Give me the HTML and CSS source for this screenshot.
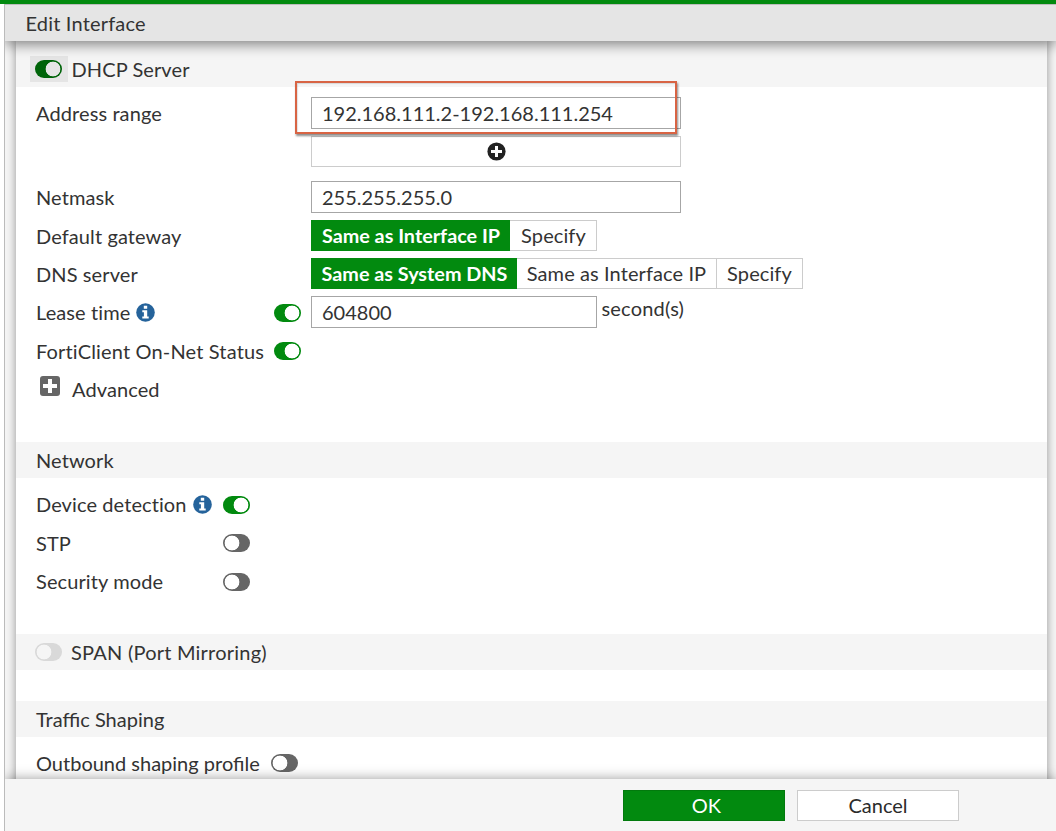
FILE: index.html
```html
<!DOCTYPE html>
<html lang="en">
<head>
<meta charset="utf-8">
<title>Edit Interface</title>
<link rel="stylesheet" href="styles.css">
</head>
<body>
<svg class="defs" aria-hidden="true">
  <symbol id="info" viewBox="0 0 19 19"><circle cx="9.5" cy="9.5" r="9.3" fill="#25639b"/><path d="M7.8 2.8h3.4v2.9H7.8zM6.3 7.2h4.9v6.3h1.5v2H6.3v-2h1.6V9.2H6.3z" fill="#fff"/></symbol>
</svg>
<div class="app">
  <div class="topbar"></div>
  <div class="dialog">
    <header class="title">Edit Interface</header>
    <main class="content">
      <div class="panel">
        <h2 class="section section-toggle"><span class="focus"><i class="switch on dark"></i></span><span class="heading">DHCP Server</span></h2>
        <div class="rows">
          <div class="row range">
            <span class="label">Address range</span>
            <div class="stack">
              <div class="input">192.168.111.2-192.168.111.254<span class="highlight"></span></div>
              <div class="add"><svg width="19" height="19" viewBox="0 0 19 19"><circle cx="9.5" cy="9.5" r="9.1" fill="#222"/><path d="M8 4h3v4h4v3h-4v4H8v-4H4V8h4z" fill="#fff"/></svg></div>
            </div>
          </div>
          <div class="row netmask"><span class="label">Netmask</span><div class="input">255.255.255.0</div></div>
          <div class="row gateway"><span class="label">Default gateway</span><div class="choices"><span class="choice active gw-ip">Same as Interface IP</span><span class="choice specify">Specify</span></div></div>
          <div class="row dns"><span class="label">DNS server</span><div class="choices"><span class="choice active sys">Same as System DNS</span><span class="choice ip">Same as Interface IP</span><span class="choice specify">Specify</span></div></div>
          <div class="row lease"><span class="label">Lease time<svg class="info"><use href="#info"/></svg></span><i class="switch on"></i><div class="input short">604800</div><span class="unit">second(s)</span></div>
          <div class="row status"><span class="label">FortiClient On-Net Status</span><i class="switch on"></i></div>
          <div class="row advanced"><svg class="expand" width="20" height="20" viewBox="0 0 20 20"><rect width="20" height="20" rx="3" fill="#666"/><path d="M8 3h4v5h5v4h-5v5H8v-5H3V8h5z" fill="#fff"/></svg><span>Advanced</span></div>
        </div>
        <h2 class="section">Network</h2>
        <div class="rows network">
          <div class="row"><span class="label">Device detection<svg class="info"><use href="#info"/></svg></span><i class="switch on"></i></div>
          <div class="row stp"><span class="label">STP</span><i class="switch"></i></div>
          <div class="row"><span class="label">Security mode</span><i class="switch"></i></div>
        </div>
        <h2 class="section section-toggle span-section"><i class="switch disabled"></i><span class="heading">SPAN (Port Mirroring)</span></h2>
        <h2 class="section traffic">Traffic Shaping</h2>
        <div class="rows shaping">
          <div class="row"><span class="label">Outbound shaping profile</span><i class="switch"></i></div>
        </div>
      </div>
    </main>
    <footer class="footer"><button class="btn primary">OK</button><button class="btn">Cancel</button></footer>
  </div>
</div>
</body>
</html>
```
FILE: styles.css
```css
* { box-sizing: border-box; }
body { margin: 0; background: #fff; color: #333; font: 20px/22px Lato, sans-serif; letter-spacing: .1px; font-variant-ligatures: none; }
.defs { display: none; }
.app { height: 831px; display: flex; flex-direction: column; overflow: hidden; }
.topbar { height: 4px; flex: none; background: #028a0f; }
.dialog { flex: 1; min-height: 0; display: flex; flex-direction: column; margin-left: 4px; border-left: 1px solid #bbb; background: #f5f5f5; }
.title { height: 37px; flex: none; position: relative; z-index: 2; padding: 7px 20.5px 0; border-top: 1px solid #bcbcbc; background: #e5e5e5; letter-spacing: .18px; box-shadow: 0 3px 14px 0 rgba(0,0,0,.5); clip-path: inset(0 0 -40px 0); }
.content { flex: 1; min-height: 0; overflow: hidden; padding: 0 9px 0 11px; }
.panel { height: 800px; padding-top: 10px; background: #fff; box-shadow: 0 0 9px rgba(0,0,0,.4); }
.section { height: 36px; margin: 0; padding: 7px 20px 0; background: #f5f5f5; font-size: inherit; font-weight: 400; }
.section-toggle { display: flex; padding: 0 20px 0 14px; align-items: center; gap: 3.5px; }
.panel > .section:first-child { height: 46px; margin-top: -10px; padding-top: 10px; }
.focus { width: 38px; height: 26px; padding: 4px 5px; background: #e5e5e5; }
.switch { display: block; flex: none; width: 27px; height: 18px; border-radius: 9px; background: radial-gradient(circle at 9px 9px, #fff 7px, transparent 7.7px), #666; }
.switch.on { background: radial-gradient(circle at 18px 9px, #fff 7px, transparent 7.7px), #028a0f; }
.switch.dark { background: radial-gradient(circle at 18px 9px, #e5e5e5 7px, transparent 7.7px), #006409; }
.switch.disabled { background: radial-gradient(circle at 9px 9px, #f5f5f5 7px, transparent 7.7px), #d9d9d9; }
.row { display: flex; align-items: flex-start; padding-left: 20px; height: 38px; }
.label { width: 275px; display: flex; align-items: center; white-space: nowrap; }
.range { height: 87px; padding-top: 10px; }
.range .label { margin-top: 5px; }
.input { position: relative; width: 370px; height: 32px; padding: 4px 10px; border: 1px solid #a6a6a6; background: #fff; letter-spacing: 0; white-space: nowrap; }
.highlight { position: absolute; left: -17px; top: -17px; width: 382px; height: 53px; border: 2px solid #d86444; box-shadow: 1px 2px 2px rgba(0,0,0,.45), inset 1px 1px 1px rgba(0,0,0,.12); }
.add { display: flex; justify-content: center; width: 370px; height: 31px; margin-top: 7px; padding: 5px 0 0 0; border: 1px solid #ccc; }
.netmask { height: 43px; padding-top: 7px; }
.netmask .label { margin-top: 5px; }
.gateway, .dns { padding-top: 3px; }
.gateway .label, .dns .label { margin-top: 5px; }
.choices { display: flex; }
.choice { height: 31px; padding: 3px 0 0; border: 1px solid #ccc; border-left: 0; text-align: center; white-space: nowrap; }
.active { padding-left: 2px; border-color: #028a0f; background: #028a0f; color: #fff; font-size: 19.8px; font-weight: 700; letter-spacing: 0; }
.gw-ip { width: 199px; }
.specify { width: 86px; }
.gateway .specify { width: 87px; padding-left: 1px; }
.sys { width: 206px; }
.ip { width: 200px; }
.lease { height: 39px; padding-top: 3px; }
.lease .label { width: 238px; margin-top: 5px; }
.lease .switch { margin: 8px 10px 0 0; }
.short { width: 286px; }
.unit { margin: 1px 0 0 4.5px; letter-spacing: .2px; }
.info { width: 19px; height: 19px; margin: 1px 0 0 6px; }
.status .label { width: 238px; margin-top: 8px; letter-spacing: .16px; }
.status .switch { margin-top: 10px; }
.advanced { height: 72px; padding: 8px 0 0 24px; gap: 12px; }
.expand { margin-top: -2px; }
.network { height: 156px; padding-top: 8px; }
.network .label { width: 187px; margin-top: 7px; }
.network .stp .label { margin-top: 8px; }
.network .switch { margin-top: 10px; }
.network .row:last-child { margin-top: 1px; }
.span-section { padding-left: 19px; gap: 9px; letter-spacing: .22px; }
.traffic { margin-top: 31px; }
.traffic, .shaping { letter-spacing: 0; font-variant-ligatures: normal; }
.shaping { padding-top: 15px; }
.shaping .label { width: 235px; }
.shaping .switch { margin-top: 2px; }
.footer { height: 52px; flex: none; position: relative; z-index: 2; display: flex; gap: 12px; padding: 11px 0 0 618px; background: #f5f5f5; box-shadow: 0 0 12px rgba(0,0,0,.4); clip-path: inset(-40px 0 0 0); }
.btn { width: 162px; height: 31px; padding: 0 0 2px; border: 1px solid #ccc; background: #fff; color: #2b2b2b; font: inherit; }
.primary { padding-left: 5px; background: #028a0f; border-color: #027a0d; color: #fff; }
```
